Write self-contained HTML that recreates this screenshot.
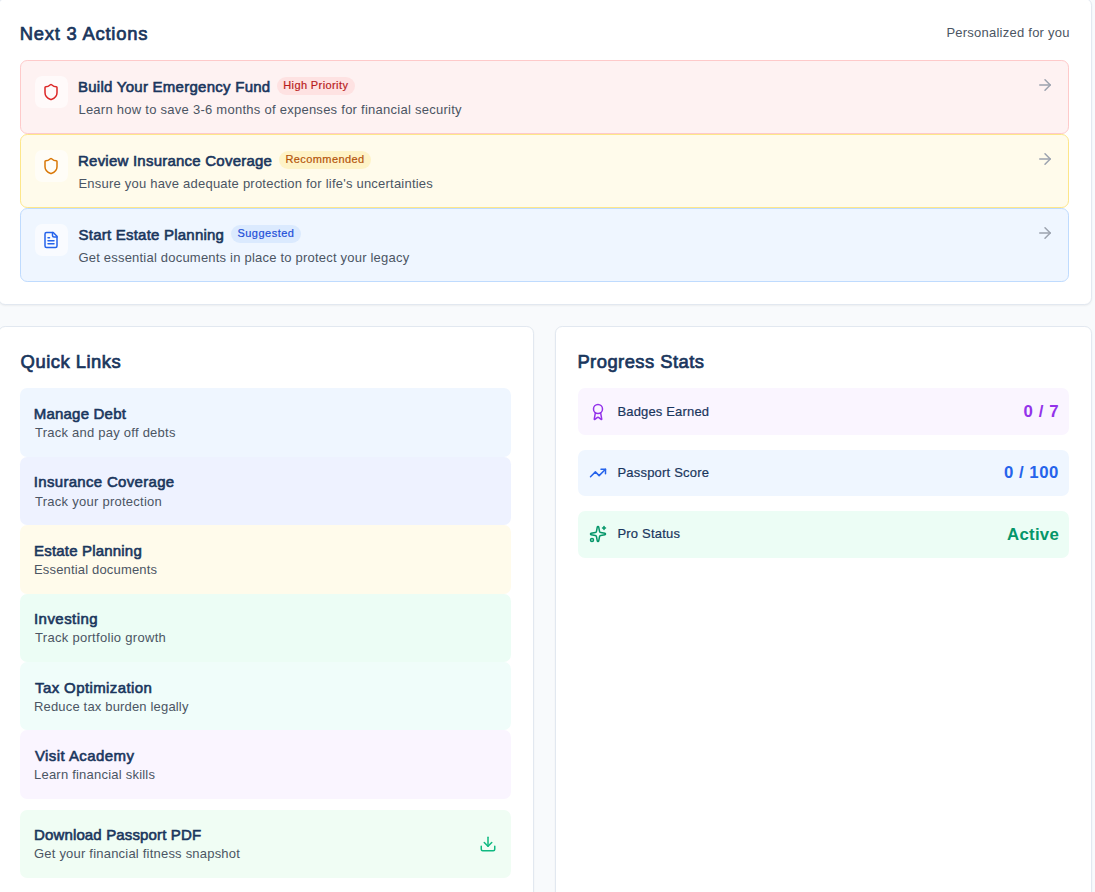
<!DOCTYPE html>
<html>
<head>
<meta charset="utf-8">
<title>Dashboard</title>
<style>
*{box-sizing:border-box;margin:0;padding:0}
html,body{width:1095px;height:892px;overflow:hidden;background:#f8fafc}
body{font-family:"Liberation Sans",sans-serif;position:relative}
.card{position:absolute;background:#fff;border:1px solid #e2e8f0;border-radius:7.2px;box-shadow:0 1px 2px rgba(0,0,0,.05)}
.bx{position:absolute;border-radius:7.2px}
.act{border:1px solid}
.pill{position:absolute;height:18px;border-radius:9px}
.ic{position:absolute;fill:none;stroke-linecap:round;stroke-linejoin:round}
.x{position:absolute;white-space:nowrap}
.h{font-size:18.4px;font-weight:400;line-height:25.2px;color:#1a365d;-webkit-text-stroke:0.7px currentColor}
.t{font-size:15px;font-weight:400;line-height:21.6px;color:#1a365d;-webkit-text-stroke:0.6px currentColor}
.d{font-size:13px;font-weight:400;line-height:18px;color:#4b5563}
.l{font-size:13px;font-weight:400;line-height:18px;color:#1a365d;-webkit-text-stroke:0.2px currentColor}
.b{font-size:11px;font-weight:400;line-height:14.4px;color:#000;-webkit-text-stroke:0.2px currentColor}
.v{font-size:16.8px;font-weight:700;line-height:25.2px;color:#000}
</style>
</head>
<body>
<section aria-label="Next 3 Actions">
<div class="card" style="left:-2.5px;top:-2px;width:1094.5px;height:307px"></div>
<div class="x h" style="left:19.7px;top:20.7px;letter-spacing:0.78px;">Next 3 Actions</div>
<div class="x d" style="left:946.4px;top:24.2px;letter-spacing:0.24px;">Personalized for you</div>
<div class="bx act" style="left:20px;top:60px;width:1049.4px;height:74px;background:#fef2f2;border-color:#fecaca"></div>
<div class="bx" style="left:35px;top:75.8px;width:32.6px;height:32.4px;background:rgba(255,255,255,.6)"></div>
<svg class="ic" style="left:42px;top:83px;width:18px;height:18px;stroke:#dc2626;stroke-width:2" viewBox="0 0 24 24"><path d="M20 13c0 5-3.500 7.500-7.660 8.950a1 1 0 0 1-.670-.010C7.500 20.500 4 18 4 13V6a1 1 0 0 1 1-1c2 0 4.500-1.200 6.240-2.720a1.170 1.170 0 0 1 1.520 0C14.510 3.810 17 5 19 5a1 1 0 0 1 1 1z"/></svg>
<div class="x t" style="left:78px;top:76.2px;letter-spacing:0.26px;">Build Your Emergency Fund</div>
<div class="pill" style="left:277.4px;top:77px;width:77.6px;background:#fee2e2"></div>
<div class="x b" style="left:283.2px;top:78.4px;letter-spacing:0.4px;color:#b91c1c;">High Priority</div>
<div class="x d" style="left:78.4px;top:101.3px;letter-spacing:0.26px;">Learn how to save 3-6 months of expenses for financial security</div>
<svg class="ic" style="left:1036.2px;top:76.2px;width:18px;height:18px;stroke:#9ca3af;stroke-width:2" viewBox="0 0 24 24"><path d="M5 12h14"/><path d="m12 5 7 7-7 7"/></svg>
<div class="bx act" style="left:20px;top:134px;width:1049.4px;height:74px;background:#fffbeb;border-color:#fde68a"></div>
<div class="bx" style="left:35px;top:149.8px;width:32.6px;height:32.4px;background:rgba(255,255,255,.6)"></div>
<svg class="ic" style="left:42px;top:157px;width:18px;height:18px;stroke:#d97706;stroke-width:2" viewBox="0 0 24 24"><path d="M20 13c0 5-3.500 7.500-7.660 8.950a1 1 0 0 1-.670-.010C7.500 20.500 4 18 4 13V6a1 1 0 0 1 1-1c2 0 4.500-1.200 6.240-2.720a1.170 1.170 0 0 1 1.520 0C14.510 3.810 17 5 19 5a1 1 0 0 1 1 1z"/></svg>
<div class="x t" style="left:78px;top:150.2px;letter-spacing:0.23px;">Review Insurance Coverage</div>
<div class="pill" style="left:279px;top:151px;width:92px;background:#fef3c7"></div>
<div class="x b" style="left:285.4px;top:152.4px;letter-spacing:0.42px;color:#b45309;">Recommended</div>
<div class="x d" style="left:78.4px;top:175.3px;letter-spacing:0.22px;">Ensure you have adequate protection for life's uncertainties</div>
<svg class="ic" style="left:1036.2px;top:150.2px;width:18px;height:18px;stroke:#9ca3af;stroke-width:2" viewBox="0 0 24 24"><path d="M5 12h14"/><path d="m12 5 7 7-7 7"/></svg>
<div class="bx act" style="left:20px;top:208px;width:1049.4px;height:74px;background:#eff6ff;border-color:#bfdbfe"></div>
<div class="bx" style="left:35px;top:223.8px;width:32.6px;height:32.4px;background:rgba(255,255,255,.6)"></div>
<svg class="ic" style="left:42px;top:231px;width:18px;height:18px;stroke:#2563eb;stroke-width:2" viewBox="0 0 24 24"><path d="M15 2H6a2 2 0 0 0-2 2v16a2 2 0 0 0 2 2h12a2 2 0 0 0 2-2V7Z"/><path d="M14 2v4a2 2 0 0 0 2 2h4"/><path d="M10 9H8"/><path d="M16 13H8"/><path d="M16 17H8"/></svg>
<div class="x t" style="left:78.6px;top:224.2px;letter-spacing:0.22px;">Start Estate Planning</div>
<div class="pill" style="left:231px;top:225px;width:70px;background:#dbeafe"></div>
<div class="x b" style="left:237.4px;top:226.4px;letter-spacing:0.5px;color:#1d4ed8;">Suggested</div>
<div class="x d" style="left:78.4px;top:249.3px;letter-spacing:0.21px;">Get essential documents in place to protect your legacy</div>
<svg class="ic" style="left:1036.2px;top:224.2px;width:18px;height:18px;stroke:#9ca3af;stroke-width:2" viewBox="0 0 24 24"><path d="M5 12h14"/><path d="m12 5 7 7-7 7"/></svg>
</section>
<section aria-label="Quick Links">
<div class="card" style="left:-2.5px;top:326px;width:536.5px;height:600px"></div>
<div class="x h" style="left:20.6px;top:348.8px;letter-spacing:0.5px;">Quick Links</div>
<div class="bx" style="left:20px;top:388.4px;width:491px;height:68.4px;background:#eff6ff"></div>
<div class="x t" style="left:33.8px;top:403px;letter-spacing:0.2px;">Manage Debt</div>
<div class="x d" style="left:35px;top:424.1px;letter-spacing:0.24px;">Track and pay off debts</div>
<div class="bx" style="left:20px;top:456.8px;width:491px;height:68.4px;background:#eef2ff"></div>
<div class="x t" style="left:33.8px;top:471.4px;letter-spacing:0.31px;">Insurance Coverage</div>
<div class="x d" style="left:35px;top:492.5px;letter-spacing:0.26px;">Track your protection</div>
<div class="bx" style="left:20px;top:525.2px;width:491px;height:68.4px;background:#fffbeb"></div>
<div class="x t" style="left:34px;top:539.8px;letter-spacing:0.19px;">Estate Planning</div>
<div class="x d" style="left:34px;top:560.9px;letter-spacing:0.17px;">Essential documents</div>
<div class="bx" style="left:20px;top:593.6px;width:491px;height:68.4px;background:#ecfdf5"></div>
<div class="x t" style="left:34px;top:608.2px;letter-spacing:0.45px;">Investing</div>
<div class="x d" style="left:35px;top:629.3px;letter-spacing:0.3px;">Track portfolio growth</div>
<div class="bx" style="left:20px;top:662px;width:491px;height:68.4px;background:#f0fdfa"></div>
<div class="x t" style="left:35px;top:676.6px;letter-spacing:0.4px;">Tax Optimization</div>
<div class="x d" style="left:34px;top:697.7px;letter-spacing:0.17px;">Reduce tax burden legally</div>
<div class="bx" style="left:20px;top:730.4px;width:491px;height:68.4px;background:#faf5ff"></div>
<div class="x t" style="left:34.9px;top:745px;letter-spacing:0.43px;">Visit Academy</div>
<div class="x d" style="left:34px;top:766.1px;letter-spacing:0.22px;">Learn financial skills</div>
<div class="bx" style="left:20px;top:809.6px;width:491px;height:68.4px;background:#f0fdf4"></div>
<div class="x t" style="left:34px;top:824.2px;letter-spacing:0.14px;">Download Passport PDF</div>
<div class="x d" style="left:34px;top:845.3px;letter-spacing:0.21px;">Get your financial fitness snapshot</div>
<svg class="ic" style="left:479.2px;top:834.9px;width:18px;height:18px;stroke:#10b981;stroke-width:2" viewBox="0 0 24 24"><path d="M21 15v4a2 2 0 0 1-2 2H5a2 2 0 0 1-2-2v-4"/><path d="m7 10 5 5 5-5"/><path d="M12 15V3"/></svg>
</section>
<section aria-label="Progress Stats">
<div class="card" style="left:555px;top:326px;width:537px;height:600px"></div>
<div class="x h" style="left:577.4px;top:348.8px;letter-spacing:0.46px;">Progress Stats</div>
<div class="bx" style="left:578px;top:388.4px;width:491px;height:46.8px;background:#faf5ff"></div>
<svg class="ic" style="left:588.8px;top:402.8px;width:18px;height:18px;stroke:#9333ea;stroke-width:2" viewBox="0 0 24 24"><path d="m15.477 12.890 1.515 8.526a.5.5 0 0 1-.810.470l-3.580-2.687a1 1 0 0 0-1.197 0l-3.586 2.686a.5.5 0 0 1-.810-.469l1.514-8.526"/><circle cx="12" cy="8" r="6"/></svg>
<div class="x l" style="left:617.4px;top:402.8px;letter-spacing:0.17px;">Badges Earned</div>
<div class="x v" style="left:1023.4px;top:399.1px;letter-spacing:0.65px;color:#9333ea;">0 / 7</div>
<div class="bx" style="left:578px;top:449.6px;width:491px;height:46.8px;background:#eff6ff"></div>
<svg class="ic" style="left:589px;top:464px;width:18px;height:18px;stroke:#2563eb;stroke-width:2" viewBox="0 0 24 24"><path d="m22 7-8.500 8.500-5-5L2 17"/><path d="M16 7h6v6"/></svg>
<div class="x l" style="left:617.4px;top:464px;letter-spacing:0.21px;">Passport Score</div>
<div class="x v" style="left:1004px;top:460.3px;letter-spacing:0.5px;color:#2563eb;">0 / 100</div>
<div class="bx" style="left:578px;top:510.8px;width:491px;height:46.8px;background:#ecfdf5"></div>
<svg class="ic" style="left:589.2px;top:524.9px;width:18px;height:18px;stroke:#059669;stroke-width:2" viewBox="0 0 24 24"><path d="M11.017 2.814a1 1 0 0 1 1.966 0l1.051 5.558a2 2 0 0 0 1.594 1.594l5.558 1.051a1 1 0 0 1 0 1.966l-5.558 1.051a2 2 0 0 0-1.594 1.594l-1.051 5.558a1 1 0 0 1-1.966 0l-1.051-5.558a2 2 0 0 0-1.594-1.594l-5.558-1.051a1 1 0 0 1 0-1.966l5.558-1.051a2 2 0 0 0 1.594-1.594z"/><path d="M20 2v4"/><path d="M22 4h-4"/><circle cx="4" cy="20" r="2"/></svg>
<div class="x l" style="left:617.4px;top:525.2px;letter-spacing:0.21px;">Pro Status</div>
<div class="x v" style="left:1007px;top:521.5px;letter-spacing:0.28px;color:#059669;">Active</div>
</section>
</body>
</html>
